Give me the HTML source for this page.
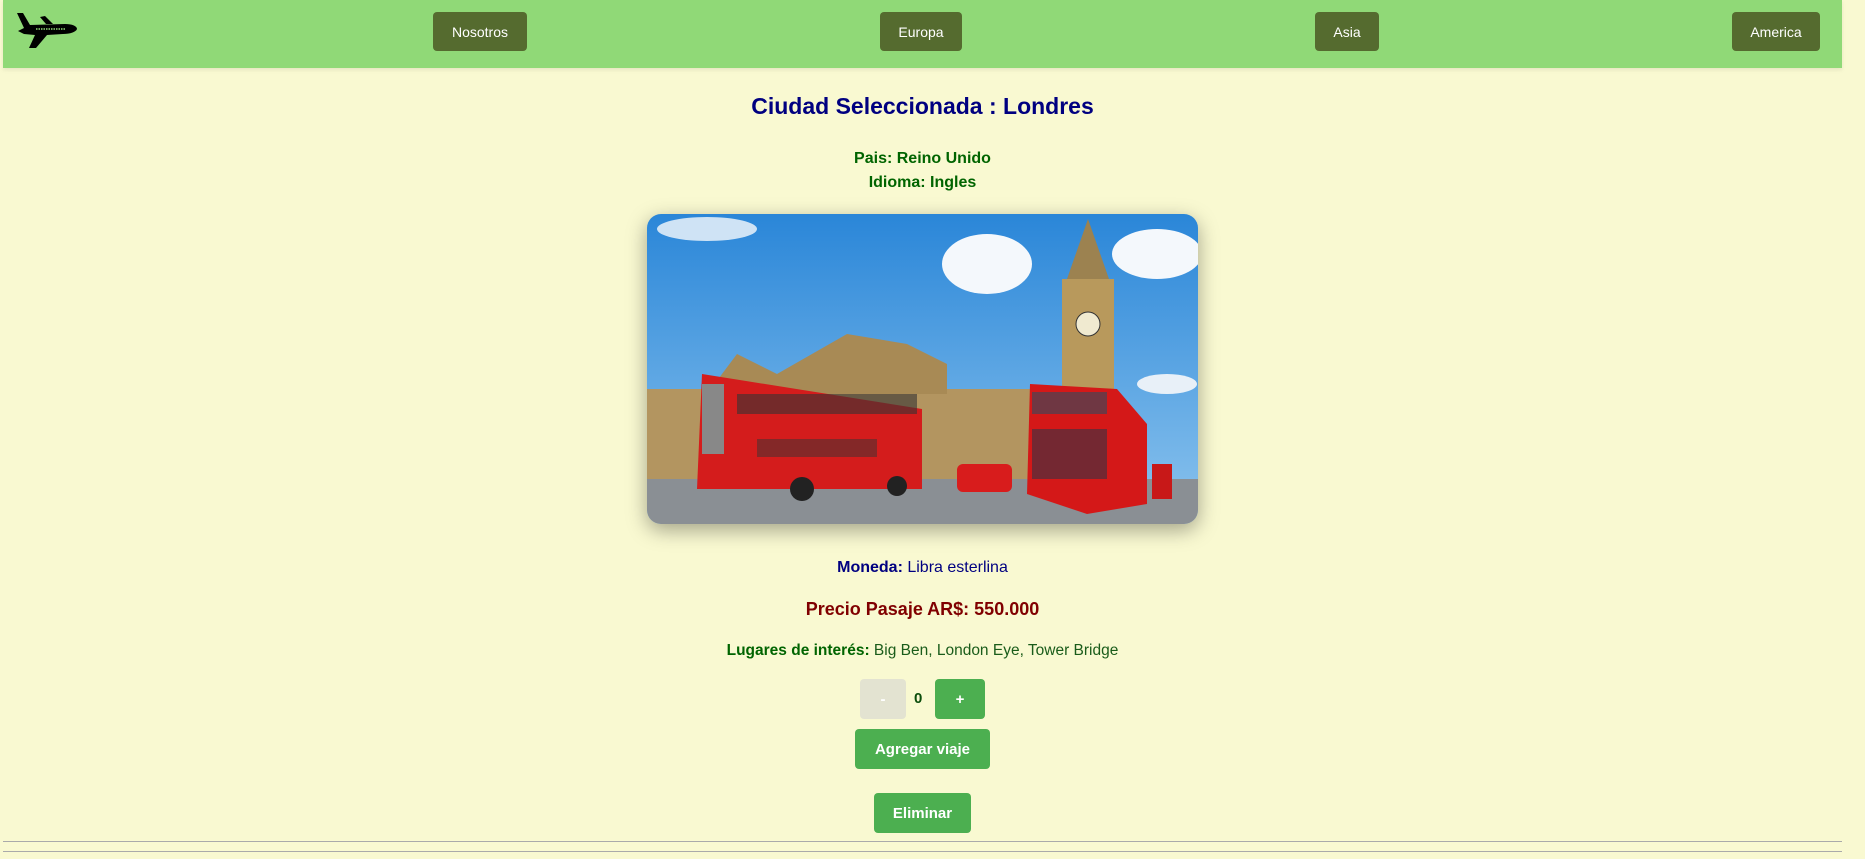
<!DOCTYPE html>
<html><head><meta charset="utf-8"><style>
*{margin:0;padding:0;box-sizing:border-box}
body{width:1865px;height:859px;background:#f9f9d1;font-family:"Liberation Sans",sans-serif;position:relative;overflow:hidden}
.nav{position:absolute;left:3px;top:0;width:1839px;height:68px;background:#90d977;box-shadow:0 2px 4px rgba(0,0,0,.08)}
.nb{position:absolute;top:12px;height:39px;background:#556b2f;color:#fff;border-radius:4px;font-size:14px;display:flex;align-items:center;justify-content:center}
.c{position:absolute;left:0;width:1845px;text-align:center}
.btn{position:absolute;background:#4caf50;color:#fff;border-radius:4px;font-weight:bold;font-size:15px;display:flex;align-items:center;justify-content:center}
hr{position:absolute;left:3px;width:1839px;border:0;border-top:1px solid #aaa}
</style></head><body>
<div class="nav">
<svg style="position:absolute;left:12px;top:11px" width="62" height="38" viewBox="0 0 62 38">
<path d="M2 2 L8 2 L15 14 L50 13 C57 13 62 15 62 18 C61 21 55 23 48 23 L32 24 L21 37 L14 37 L20 24 L9 23 L3 20 L9 17 Z" fill="#000"/>
<path d="M25 6 L30 5 L38 13 L31 13 Z" fill="#000"/>
<line x1="21" y1="18" x2="50" y2="18" stroke="#90d977" stroke-width="1.4" stroke-dasharray="1.5 1"/>
</svg>
<div class="nb" style="left:430px;width:94px">Nosotros</div>
<div class="nb" style="left:877px;width:82px">Europa</div>
<div class="nb" style="left:1312px;width:64px">Asia</div>
<div class="nb" style="left:1729px;width:88px">America</div>
</div>
<div class="c" style="top:93px;font-size:23px;font-weight:bold;color:#000080">Ciudad Seleccionada : Londres</div>
<div class="c" style="top:147px;font-size:16px;font-weight:bold;color:#006400;line-height:24px">Pais: Reino Unido<br>Idioma: Ingles</div>
<div style="position:absolute;left:647px;top:214px;width:551px;height:310px;border-radius:14px;overflow:hidden;box-shadow:0 6px 20px rgba(0,0,0,.35)">
<svg width="551" height="310" viewBox="0 0 551 310" preserveAspectRatio="none">
<defs><linearGradient id="s" x1="0" y1="0" x2="0" y2="1"><stop offset="0" stop-color="#2a86d8"/><stop offset="1" stop-color="#8cc4ee"/></linearGradient></defs>
<rect width="551" height="310" fill="url(#s)"/>
<ellipse cx="340" cy="50" rx="45" ry="30" fill="#f4f8fc"/>
<ellipse cx="510" cy="40" rx="45" ry="25" fill="#f4f8fc"/>
<ellipse cx="60" cy="15" rx="50" ry="12" fill="#cfe3f5"/>
<ellipse cx="520" cy="170" rx="30" ry="10" fill="#e8f0f8"/>
<rect x="0" y="175" width="410" height="95" fill="#b39560"/>
<polygon points="60,180 90,140 130,160 200,120 260,130 300,150 300,180" fill="#a88a55"/>
<rect x="415" y="65" width="52" height="130" fill="#b8995c"/>
<polygon points="420,65 441,5 462,65" fill="#9c8250"/>
<circle cx="441" cy="110" r="12" fill="#f0ead0" stroke="#333"/>
<rect x="0" y="265" width="551" height="45" fill="#8a8f94"/>
<polygon points="55,160 275,195 275,275 50,275" fill="#d41c1c"/>
<rect x="55" y="170" width="22" height="70" fill="#888"/>
<rect x="90" y="180" width="180" height="20" fill="#333" opacity=".6"/>
<rect x="110" y="225" width="120" height="18" fill="#333" opacity=".5"/>
<circle cx="155" cy="275" r="12" fill="#222"/><circle cx="250" cy="272" r="10" fill="#222"/>
<rect x="310" y="250" width="55" height="28" rx="6" fill="#d81c1c"/>
<polygon points="383,170 470,175 500,210 500,290 440,300 380,280" fill="#d41818"/>
<rect x="385" y="178" width="75" height="22" fill="#445" opacity=".7"/>
<rect x="385" y="215" width="75" height="50" fill="#334" opacity=".6"/>
<rect x="505" y="250" width="20" height="35" fill="#c81818"/>
</svg></div>
<div class="c" style="top:559px;font-size:16px;color:#000080"><b>Moneda:</b> Libra esterlina</div>
<div class="c" style="top:599px;font-size:18px;font-weight:bold;color:#800000">Precio Pasaje AR$: 550.000</div>
<div class="c" style="top:642px;font-size:15.5px;color:#1a5c1a"><b style="color:#006400">Lugares de interés:</b> Big Ben, London Eye, Tower Bridge</div>
<div class="btn" style="left:860px;top:679px;width:46px;height:40px;background:#e3e3d1;color:#fff">-</div>
<div style="position:absolute;left:914px;top:690px;font-size:15px;font-weight:bold;color:#0b4d0b">0</div>
<div class="btn" style="left:935px;top:679px;width:50px;height:40px">+</div>
<div class="btn" style="left:855px;top:729px;width:135px;height:40px">Agregar viaje</div>
<div class="btn" style="left:874px;top:793px;width:97px;height:40px">Eliminar</div>
<hr style="top:841px"><hr style="top:851px">
</body></html>
